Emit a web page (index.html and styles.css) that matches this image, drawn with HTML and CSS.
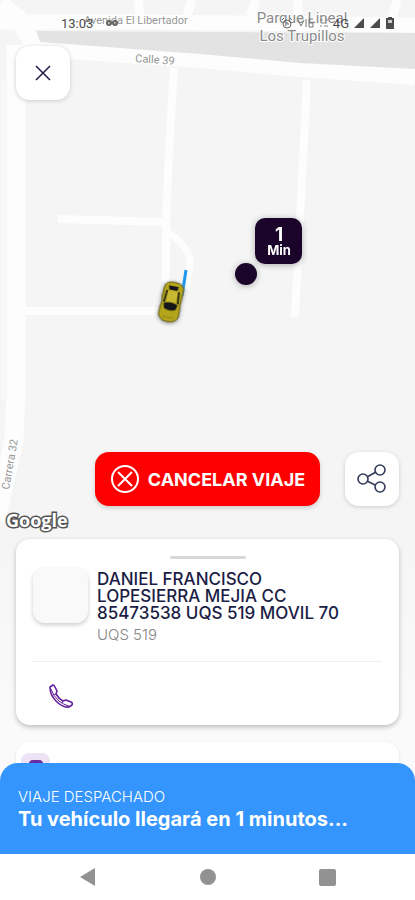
FILE: index.html
```
<!DOCTYPE html>
<html lang="es">
   <head>
      <meta charset="utf-8">
      <meta name="viewport" content="width=device-width, initial-scale=1">
      <title>Viaje despachado</title>
      <link rel="stylesheet" href="styles.css">
   </head>
   <body>
      <div class="screen">
         <svg class="map" viewBox="0 0 415 900" preserveAspectRatio="xMidYMin slice" role="img" aria-label="Mapa">
            <!-- streets -->
            <g fill="none" stroke="#fdfdfd">
               <path d="M0 22 L130 22 L415 25" stroke-width="15"/>
               <path d="M138 0 L140 16 M192 0 L187 16 M256 0 L250 16 M298 0 V16 M397 0 L392 18" stroke-width="9"/>
               <path d="M0 5 L18 18 L32 42 L70 50 L200 59 L300 68 L415 76" stroke-width="18"/>
               <path d="M16 45 V390 L14 440 L-4 520" stroke-width="19"/>
               <path d="M3 80 V400" stroke="#f9f9f9" stroke-width="4"/>
               <path d="M174 68 L169 150 L166 225 V282" stroke-width="8"/>
               <path d="M167 232 Q191 247 190 264 L186 290" stroke-width="7"/>
               <path d="M58 219 L166 222 M24 311 H166" stroke-width="8"/>
               <path d="M307 80 L300 218 L295 317" stroke-width="8"/>
            </g>
            <path d="M36 31 L415 33 V69 L300 63 L200 54 L40 42 Z" fill="#e3e3e3"/>
            <g class="street">
               <text x="84" y="24">Avenida El Libertador</text>
               <text x="135" y="62" transform="rotate(4 135 62)">Calle 39</text>
               <text x="9" y="490" transform="rotate(-80 9 490)">Carrera 32</text>
            </g>
            <g class="place">
               <text x="302" y="23">Parque Lineal</text>
               <text x="302" y="41">Los Trupillos</text>
            </g>
            <!-- route and taxi -->
            <path d="M186 270 L182 296" stroke="#1e96f0" stroke-width="3"/>
            <g class="taxi" transform="translate(171 302) rotate(11)">
               <path d="M-9 -15 Q-8 -20 0 -20 Q8 -20 10 -15 L10 -4 Q9 1 10 6 L10 14 Q8 20 0 20 Q-8 20 -10 14 L-10 6 Q-8 1 -10 -4Z" fill="#b5a51b" stroke="#635c1d"/>
               <path d="M-5 -16 H5 L4 -12 H-4Z M-7 2 Q0 -1 7 2 L6 7 Q0 10 -6 7Z" fill="#15171b"/>
               <path d="M-6 -11 L-7 1 M6 -11 L7 1" stroke="#302e15" stroke-width="2"/>
               <rect x="-5" y="-11" width="10" height="11" rx="2" fill="#c8b832"/>
               <path d="M-6 15 Q0 17 6 15" fill="none" stroke="#938719"/>
            </g>
            <!-- pickup point -->
            <g class="pickup">
               <circle cx="246" cy="274" r="11"/>
               <rect x="255" y="218" width="47" height="46" rx="10"/>
               <text class="eta" x="279" y="241">1</text>
               <text class="unit" x="279" y="255">Min</text>
            </g>
         </svg>

         <header class="status">
            <span>13:03</span>
            <svg class="loop" width="14" height="10" viewBox="0 0 14 10" fill="none" stroke="#666" stroke-width="2"><circle cx="4" cy="5" r="2"/><circle cx="10" cy="5" r="2"/></svg>
            <div class="signals">
               <svg width="12" height="12" viewBox="0 0 12 12" fill="none" stroke="#666"><circle cx="6" cy="7" r="4"/><path d="M6 5v2h2M1 3l2-2M9 1l2 2"/></svg>
               <svg width="18" height="12" viewBox="0 0 18 12" fill="none" stroke="#777"><path d="M1 3l3 6 3-6M9 2v8M12 2v8h4V6h-4M12 2h4"/></svg>
               <svg width="10" height="12" viewBox="0 0 10 12" fill="none" stroke="#888"><path d="M1 3h3M6 3h3M2 6h6M1 9h2M5 9h4"/></svg>
               <span>4G</span>
               <svg width="12" height="12" viewBox="0 0 12 12" fill="#4c4c4c"><path d="M11 1v10H1z"/></svg>
               <svg width="12" height="12" viewBox="0 0 12 12" fill="#4c4c4c"><path d="M11 1v10H1z"/></svg>
               <svg width="10" height="14" viewBox="0 0 10 14"><path d="M3 1h4v1h2v11H1V2h2z" fill="#4c4c4c"/><path d="M3 4h4v3H3z" fill="#ccc"/></svg>
            </div>
         </header>

         <main>
            <button class="square close" aria-label="Cerrar">
               <svg width="16" height="16" viewBox="0 0 16 16" fill="none" stroke="#211b48" stroke-width="1.5"><path d="M1 1l14 14M15 1L1 15"/></svg>
            </button>

            <div class="actions">
               <button class="cancel">
                  <svg width="30" height="30" viewBox="0 0 30 30" fill="none" stroke="#fff" stroke-width="2"><circle cx="15" cy="15" r="13"/><path d="M8 8l14 14M22 8L8 22"/></svg>
                  CANCELAR VIAJE
               </button>
               <button class="square" aria-label="Compartir">
                  <svg width="30" height="30" viewBox="0 0 30 30" fill="none" stroke="#343b59" stroke-width="1.6"><circle cx="6" cy="15" r="5"/><circle cx="23" cy="6" r="5"/><circle cx="23" cy="23" r="5"/><path d="M10 13l9-5M10 17l8 4"/></svg>
               </button>
            </div>
            <div class="google">Google</div>

            <section class="card driver">
               <div class="handle"></div>
               <div class="info">
                  <div class="photo"></div>
                  <div>
                     <h1>DANIEL FRANCISCO LOPESIERRA MEJIA CC 85473538 UQS 519 MOVIL 70</h1>
                     <p class="plate">UQS 519</p>
                  </div>
               </div>
               <div class="contact">
                  <button class="call" aria-label="Llamar">
                     <svg width="26" height="26" viewBox="0 0 26 26" fill="none" stroke="#64219b" stroke-width="1.6" stroke-linejoin="round"><path d="M2 4l3-2q1 0 2 2l2 4-1 3q3 5 7 7l3-1 5 2q2 1 1 3l-3 2q-6 1-13-6Q2 12 2 4z"/><path d="M3 6q2 7 8 12 5 4 10 5M8 11l-2 1M15 18l-1 2" stroke-width="1"/></svg>
                  </button>
               </div>
            </section>
            <section class="card next">
               <span class="badge"></span>
            </section>
         </main>

         <section class="dispatch">
            <p>VIAJE DESPACHADO</p>
            <h2>Tu vehículo llegará en 1 minutos...</h2>
         </section>

         <nav class="keys">
            <button aria-label="Atrás"><svg width="18" height="18" viewBox="0 0 18 18" fill="#929292"><path d="M1 9L16 0v18z"/></svg></button>
            <button aria-label="Inicio"><svg width="18" height="18" viewBox="0 0 18 18" fill="#929292"><circle cx="9" cy="9" r="8"/></svg></button>
            <button aria-label="Recientes"><svg width="18" height="18" viewBox="0 0 18 18" fill="#929292"><rect x="1" y="1" width="17" height="17" rx="2"/></svg></button>
         </nav>
      </div>
   </body>
</html>
```
FILE: styles.css
```
* {
box-sizing: border-box;
}
body {
margin: 0;
font-family: "Inter", sans-serif;
background: #f5f5f5;
}
h1, h2, p {
margin: 0;
}
button {
padding: 0;
border: 0;
background: none;
font-family: inherit;
cursor: pointer;
}
svg {
display: block;
flex: none;
}
.screen {
position: relative;
display: flex;
flex-direction: column;
min-height: 100vh;
overflow: hidden;
}
/* map */
.map {
position: absolute;
top: 0;
left: 0;
width: 100%;
height: 100%;
background: linear-gradient(#f5f5f5 60%, #fafafa 80%);
}
.map text {
font-family: "Roboto", sans-serif;
paint-order: stroke;
stroke: #fff;
stroke-width: 2px;
}
.street text {
font-size: 11px;
fill: #959595;
}
.place text {
font-size: 15px;
fill: #8a8a8a;
text-anchor: middle;
}
.taxi {
filter: drop-shadow(0 1px 2px #888);
}
.pickup {
fill: #1b0429;
filter: drop-shadow(0 1px 3px #aaa);
}
.map .pickup text {
font-family: "Inter", sans-serif;
font-weight: 700;
fill: #fff;
stroke: none;
text-anchor: middle;
}
.pickup .eta {
font-size: 19px;
}
.pickup .unit {
font-size: 13px;
}
/* phone status bar */
.status {
position: relative;
display: flex;
align-items: center;
height: 46px;
padding: 0 20px 0 61px;
font: 13px "Roboto", sans-serif;
color: #4c4c4c;
}
.loop {
margin-left: 12px;
}
.signals {
display: flex;
align-items: center;
gap: 4px;
margin-left: auto;
}
main {
position: relative;
display: flex;
flex: 1;
flex-direction: column;
padding: 0 16px;
}
.square {
display: flex;
flex: none;
align-items: center;
justify-content: center;
width: 54px;
height: 54px;
border-radius: 14px;
background: #fff;
box-shadow: 0 1px 4px #ccc;
}
.actions {
display: flex;
justify-content: flex-end;
gap: 25px;
margin-top: auto;
}
.cancel {
display: flex;
flex: 0 1 225px;
align-items: center;
justify-content: center;
gap: 8px;
border-radius: 14px;
background: #fe0000;
box-shadow: 0 2px 4px #ccc;
color: #fff;
font-size: 18px;
font-weight: 700;
white-space: nowrap;
}
.google {
align-self: flex-start;
margin: 0 0 5px -10px;
font: 700 18px/28px "Open Sans", sans-serif;
color: #fff;
-webkit-text-stroke: 3px #555;
paint-order: stroke fill;
}
/* cards */
.card {
border-radius: 14px;
background: #fff;
box-shadow: 0 2px 5px #bbb;
}
.driver {
padding: 17px 17px 1px;
}
.handle {
width: 76px;
height: 3px;
margin: 0 auto 9px;
border-radius: 2px;
background: #d8d8d8;
}
.info {
display: flex;
gap: 9px;
padding: 0 36px 17px 0;
border-bottom: 1px solid #eee;
}
.photo {
flex: none;
width: 55px;
height: 55px;
border-radius: 12px;
background: #f9f9f9;
box-shadow: 0 2px 4px #ccc;
}
h1 {
padding-top: 3px;
font-size: 17px;
font-weight: 500;
line-height: 17px;
color: #1b1d45;
}
.plate {
margin-top: 4px;
font-size: 15px;
font-weight: 300;
line-height: 18px;
color: #858585;
}
.contact {
padding: 21px 15px 15px;
}
.call {
display: block;
}
.next {
height: 41px;
margin-top: 17px;
padding: 11px 5px;
box-shadow: 0 1px 3px #ddd;
}
.badge {
display: flex;
justify-content: center;
width: 29px;
height: 29px;
padding-top: 7px;
border-radius: 8px;
background: #eee3f5;
}
.badge::before {
content: "";
width: 14px;
height: 14px;
border-radius: 4px;
background: #6b2ba0;
}
/* trip state */
.dispatch {
position: relative;
margin-top: -20px;
padding: 25px 18px 22px;
border-radius: 18px 18px 0 0;
background: #3395fd;
color: #fff;
}
.dispatch p {
font-size: 15px;
font-weight: 300;
line-height: 18px;
}
.dispatch h2 {
font-size: 20px;
font-weight: 700;
line-height: 26px;
}
.keys {
position: relative;
display: flex;
align-items: center;
justify-content: space-between;
height: 46px;
padding: 0 79px;
background: #fff;
}
```
